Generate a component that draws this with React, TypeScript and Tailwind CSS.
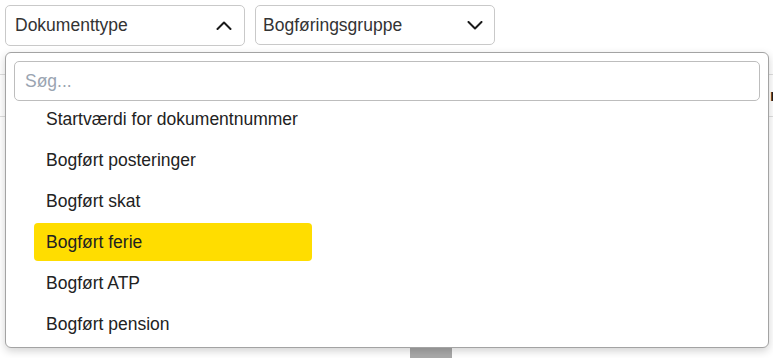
import React from "react";

const items = [
  "Startværdi for dokumentnummer",
  "Bogført posteringer",
  "Bogført skat",
  "Bogført ferie",
  "Bogført ATP",
  "Bogført pension",
];

function Chevron({ up }: { up?: boolean }) {
  return (
    <svg width="16" height="9" viewBox="0 0 16 9" fill="none" className="shrink-0">
      <polyline
        points={up ? "1.5,8 8,1.5 14.5,8" : "1.5,1 8,7.5 14.5,1"}
        stroke="#1a1a1a"
        strokeWidth="2"
        strokeLinecap="round"
        strokeLinejoin="round"
      />
    </svg>
  );
}

export default function App() {
  return (
    <div
      className="relative w-[773px] h-[358px] overflow-hidden bg-white text-[#333]"
      style={{ fontFamily: '"Liberation Sans", Arial, sans-serif' }}
    >
      {/* Background page */}
      <div className="flex gap-[10px] pl-[5px] pt-[5px]">
        <div className="flex h-[41px] w-[240px] items-center justify-between rounded-[5px] border border-[#c9c9c9] pl-[9px] pr-[12px] text-[17.5px]">
          <span>Dokumenttype</span>
          <Chevron up />
        </div>
        <div className="flex h-[40px] w-[240px] items-center justify-between rounded-[5px] border border-[#c9c9c9] pl-[7px] pr-[11px] text-[17.5px]">
          <span>Bogføringsgruppe</span>
          <Chevron />
        </div>
      </div>
      <div className="mt-[28px] flex h-[43px] items-center border-y border-[#dedede] pl-[770px] text-[17px] font-bold text-[#222]">
        <span className="whitespace-nowrap">nr.</span>
      </div>
      <div className="mt-[223px] flex pl-[410px]">
        <div className="flex h-[30px] w-[42px] justify-center rounded-[4px] bg-[#a9a9a9]">
          <div className="mt-[4px] h-[4px] w-[12px] rounded-b-[2px] bg-[#d6d6d6]" />
        </div>
      </div>

      {/* Dropdown overlay */}
      <div className="absolute left-[5px] top-[52px] h-[296px] w-[764px] overflow-hidden rounded-[6px] border border-[#a3a3a3] bg-white shadow-[0_3px_8px_rgba(0,0,0,0.18)]">
        <div className="px-[8px] pt-[8px]">
          <div className="flex h-[40px] items-center rounded-[5px] border border-[#bdbdbd] pl-[10px] text-[17.5px] text-[#9aa4b1]">
            Søg...
          </div>
        </div>
        <div className="mt-[2px] h-[244px] overflow-hidden pl-[28px]">
          <div className="mt-[-3px] flex flex-col gap-[3px]">
            {items.map((t) => (
              <div
                key={t}
                className={
                  "flex h-[38px] w-[278px] items-center whitespace-nowrap rounded-[4px] pl-[12px] text-[17.5px] text-[#222] " +
                  (t === "Bogført ferie" ? "bg-[#ffdd00]" : "")
                }
              >
                {t}
              </div>
            ))}
          </div>
        </div>
      </div>
    </div>
  );
}
